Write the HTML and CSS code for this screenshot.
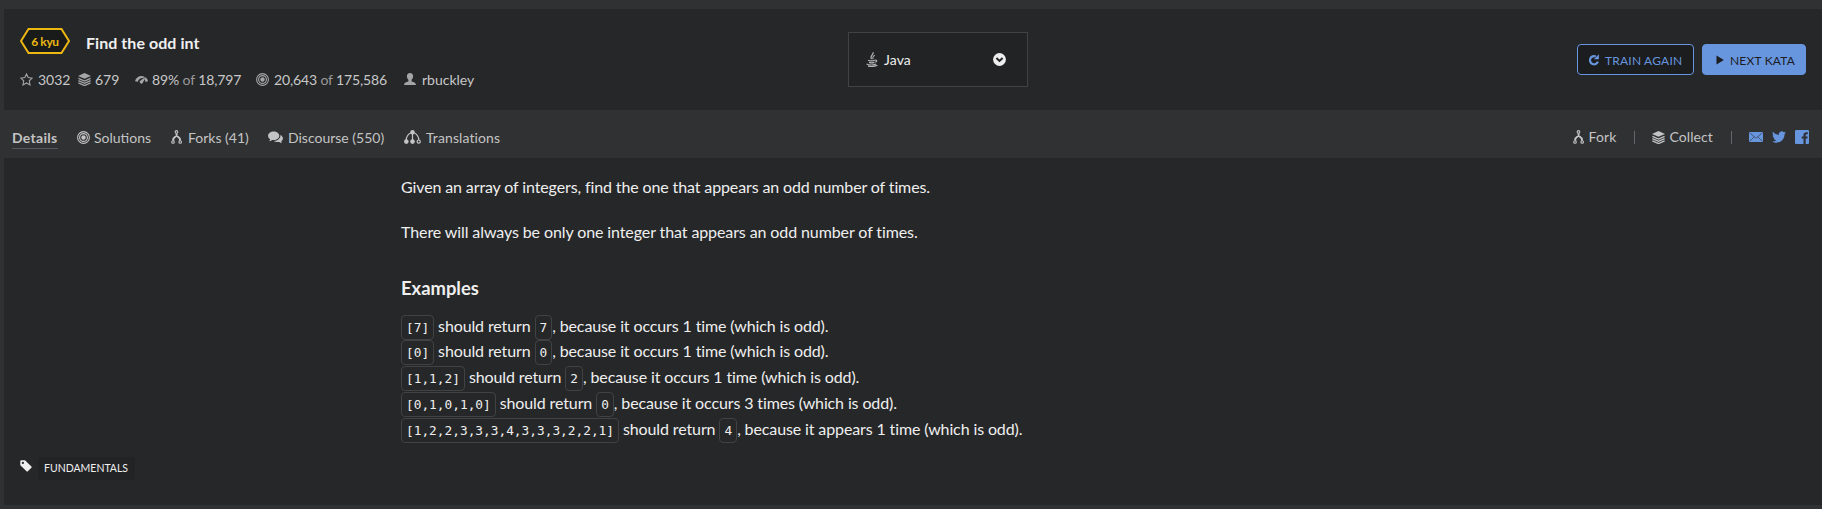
FILE: index.html
```html
<!DOCTYPE html>
<html lang="en">
<head>
<meta charset="utf-8">
<title>Find the odd int</title>
<link rel="stylesheet" href="styles.css">
</head>
<body>
<svg class="defs" width="0" height="0">
  <symbol id="layers" viewBox="0 0 13 13"><path d="M6.500 0 13 2.900 6.500 5.800 0 2.900z"/><path fill="none" stroke="currentColor" stroke-width="1.300" d="M.4 5.400 6.500 8.100l6.100-2.700M.4 7.700l6.100 2.700 6.100-2.700M.4 9.900l6.100 2.700 6.100-2.700"/></symbol>
  <symbol id="target" viewBox="0 0 13 13"><g fill="none" stroke="currentColor"><circle cx="6.500" cy="6.500" r="5.900" stroke-width="1.100"/><circle cx="6.500" cy="6.500" r="3.900" stroke-width="1.100"/></g><circle cx="6.500" cy="6.500" r="2.200"/></symbol>
  <symbol id="fork" viewBox="0 0 12 14"><g fill="none" stroke="currentColor"><circle cx="5.500" cy="1.900" r="1.300" stroke-width="1.100"/><circle cx="2" cy="12" r="1.300" stroke-width="1.100"/><circle cx="9.200" cy="12" r="1.300" stroke-width="1.100"/><path stroke-width="1.900" d="M5.600 3.400v2.500M5.600 5.400 2.300 8.600v2.100M5.600 5.400 8.900 8.600v2.100"/></g></symbol>
</svg>
<div class="page">
  <header class="head">
    <div class="info">
      <div class="title-row">
        <div class="rank"><svg class="hex" width="50" height="26" viewBox="0 0 50 26"><path d="M8.500 1h33L49 13l-7.500 12h-33L1 13z" fill="#191b1b" stroke="#ecb613" stroke-width="2"/></svg><span class="rank-text">6 kyu</span></div>
        <h1 class="title">Find the odd int</h1>
      </div>
      <div class="stats">
        <div class="stat"><svg width="13" height="13" viewBox="0 0 13 13"><path fill="none" stroke="currentColor" stroke-width="1.100" d="M6.500 1 8.200 4.600 12.200 5.100 9.300 7.800 10 11.900 6.500 9.900 3 11.900 3.700 7.800.8 5.100 4.800 4.600z"/></svg><span class="val">3032</span></div>
        <div class="stat"><svg width="13" height="13"><use href="#layers"/></svg><span class="val near">679</span></div>
        <div class="stat"><svg width="13" height="13" viewBox="0 0 13 13"><path d="M0 8.200C.8 5 3.400 3 6.500 3c1.200 0 2.100.2 3 .7L8.200 5C6 4.700 3.700 5.800 2.800 8.700zM10.900 4.500c1.100.9 1.800 2.100 2.100 3.700l-2.600.7c-.1-1-.4-1.700-.9-2.300z"/><path d="M11 3.600 7.700 10a1.700 1.700 0 0 1-2.800-1.900z"/></svg><span class="val near tight">89% <i>of</i> 18,797</span></div>
        <div class="stat"><svg width="13" height="13"><use href="#target"/></svg><span class="val tight">20,643 <i>of</i> 175,586</span></div>
        <div class="stat"><svg width="12" height="13" viewBox="0 0 12 13"><path d="M6 0c2 0 3.100 1.400 3.100 3.300 0 1.500-.6 2.700-1.500 3.500v1.600c2.700.6 4.400 1.600 4.400 3.600H0c0-2 1.700-3 4.400-3.600V6.800C3.500 6 2.900 4.800 2.900 3.300 2.900 1.400 4 0 6 0z"/></svg><span class="val last">rbuckley</span></div>
      </div>
    </div>
    <div class="select"><svg class="java" width="12" height="15" viewBox="0 0 12 15"><g fill="none" stroke="currentColor" stroke-width="1.200"><path d="M7 .2C8.200 2.600 3.200 3.600 5.600 7.200M8.800 3.200C6.800 4.400 6.200 5 7.200 7.200M2 8.300c2 .8 5 .7 7 0M9.200 8.300c2-.6 2 1.400 0 2M3 10.400c1.600.6 3.800.6 5.400 0M.6 12c2 1.400 8.500 1.300 9.400-.1M2 14.200c3 .5 7 .3 9.400-.9"/></g></svg><span class="lang">Java</span><svg class="caret" width="13" height="13" viewBox="0 0 13 13"><circle cx="6.500" cy="6.500" r="6.400" fill="#eee"/><path d="M3.400 5.100 6.500 8l3.100-2.900" fill="none" stroke="#222325" stroke-width="2"/></svg></div>
    <div class="actions">
      <a class="btn"><svg width="12" height="12" viewBox="0 0 12 12"><path fill="none" stroke="currentColor" stroke-width="2.200" d="M7.800 2.500A4.100 4.100 0 1 0 9.900 7.600"/><path d="M10.900.2v5H5.900z"/></svg><span>TRAIN AGAIN</span></a>
      <a class="btn solid"><svg width="12" height="12" viewBox="0 0 12 12"><path d="M2.500 1.500 9.800 6 2.500 10.500z"/></svg><span>NEXT KATA</span></a>
    </div>
  </header>
  <nav class="nav">
    <div class="tabs">
      <a class="tab active">Details</a>
      <a class="tab"><svg width="13" height="13"><use href="#target"/></svg><span class="label">Solutions</span></a>
      <a class="tab"><svg width="12" height="14"><use href="#fork"/></svg><span class="label wide">Forks (41)</span></a>
      <a class="tab"><svg width="15" height="13" viewBox="0 0 15 13"><path d="M5.700.5c3.200 0 5.600 1.900 5.600 4.300S8.900 9.100 5.700 9.100c-.6 0-1.100 0-1.600-.1-.9.800-1.900 1.200-3 1.200.7-.6 1-1.200 1-2C.8 7.400.1 6.200.1 4.800.1 2.400 2.500.5 5.700.5z"/><path d="M12.400 4.100c1.500.7 2.500 1.900 2.500 3.300 0 1.200-.7 2.200-1.700 2.900.1.800.4 1.300.9 1.800-1.200 0-2.100-.4-2.900-1.100-2 .3-4.200-.2-5.300-1.100 3.800 0 6.800-2.300 6.500-5.800z"/></svg><span class="label wide">Discourse (550)</span></a>
      <a class="tab"><svg width="17" height="14" viewBox="0 0 17 14"><circle cx="8.500" cy="2.300" r="2.300"/><g fill="none" stroke="currentColor" stroke-width="1.200"><path d="M8.500 3v8M6.600 3C3.500 4.500 2.500 6 2.200 10M10.400 3c3.100 1.500 4.100 3 4.400 7"/><circle cx="14.700" cy="11.600" r="1.600"/></g><circle cx="2.300" cy="11.600" r="2.300"/><circle cx="8.500" cy="11.600" r="2.300"/></svg><span class="label wide spaced">Translations</span></a>
    </div>
    <div class="tools">
      <a class="tool"><svg width="12" height="14"><use href="#fork"/></svg><span class="label">Fork</span></a>
      <span class="sep"></span>
      <a class="tool"><svg width="13" height="13"><use href="#layers"/></svg><span class="label">Collect</span></a>
      <span class="sep"></span>
      <div class="social">
        <svg width="14" height="14" viewBox="0 0 14 14"><path d="M0 2h14v10H0z"/><path d="M.3 2.500 7 8.200l6.700-5.700M.3 11.600l4.900-4.800M13.700 11.600 8.800 6.800" fill="none" stroke="#303133" stroke-width=".6"/></svg>
        <svg width="14" height="14" viewBox="0 0 24 24"><path d="M24 4.600c-.9.400-1.800.7-2.800.8 1-.6 1.800-1.600 2.200-2.700-1 .6-2 1-3.100 1.200A4.900 4.900 0 0 0 11.900 8.400C7.700 8.200 4.100 6.200 1.700 3.200c-1.300 2.200-.7 5.100 1.500 6.600-.8 0-1.600-.2-2.200-.6 0 2.300 1.600 4.400 3.900 4.900-.7.200-1.500.2-2.200.1.600 2 2.400 3.400 4.600 3.400A9.900 9.900 0 0 1 0 19.500a13.900 13.900 0 0 0 7.500 2.200c9.100 0 14.300-7.700 14-14.600.9-.7 1.800-1.600 2.500-2.500z"/></svg>
        <svg width="14" height="14" viewBox="0 0 14 14"><path fill-rule="evenodd" d="M1 0h12a1 1 0 0 1 1 1v12a1 1 0 0 1-1 1h-2.300V8.600h1.700l.3-2.100h-2V5.200c0-.6.3-1 1.100-1h1V2.300c-2.800-.4-4.300.4-4.300 2.600v1.600H6.700v2.100h1.800V14H1a1 1 0 0 1-1-1V1a1 1 0 0 1 1-1z"/></svg>
      </div>
    </div>
  </nav>
  <main class="body">
    <article class="desc">
      <p class="lead">Given an array of integers, find the one that appears an odd number of times.</p>
      <p class="second">There will always be only one integer that appears an odd number of times.</p>
      <h2>Examples</h2>
      <div class="examples">
        <div><code>[7]</code> should return <code>7</code>, because it occurs 1 time (which is odd).</div>
        <div><code>[0]</code> should return <code>0</code>, because it occurs 1 time (which is odd).</div>
        <div><code>[1,1,2]</code> should return <code>2</code>, because it occurs 1 time (which is odd).</div>
        <div><code>[0,1,0,1,0]</code> should return <code>0</code>, because it occurs 3 times (which is odd).</div>
        <div><code>[1,2,2,3,3,3,4,3,3,3,2,2,1]</code> should return <code>4</code>, because it appears 1 time (which is odd).</div>
      </div>
    </article>
    <div class="tags"><svg width="12" height="12" viewBox="0 0 12 12"><path fill-rule="evenodd" d="M.3 1.300a1 1 0 0 1 1-1H5l6.400 6.100a.9.900 0 0 1 0 1.300L7.800 11.300a.9.900 0 0 1-1.300 0L.3 5.200zM2.900 1.800a1.100 1.100 0 1 0 0 2.200 1.100 1.100 0 0 0 0-2.200z"/></svg><span class="tag">FUNDAMENTALS</span></div>
  </main>
</div>
</body>
</html>
```
FILE: styles.css
```css
* { box-sizing: border-box; }
body { margin: 0; background: #303133; font-family: Lato, sans-serif; color: #efefef; overflow: hidden; }
svg { fill: currentColor; flex: none; display: block; }
.defs { position: absolute; }
.page { height: 509px; padding: 9px 0 4px 4px; display: flex; flex-direction: column; white-space: nowrap; }
.head { height: 101px; background: #262729; display: grid; grid-template-columns: 844px 180px 1fr; align-items: start; }
.info { padding: 19px 0 0 16px; }
.title-row { display: flex; height: 26px; }
.rank { display: grid; width: 50px; height: 26px; grid-template-rows: 26px; justify-items: center; }
.hex, .rank-text { grid-area: 1 / 1; }
.rank-text { color: #ecb613; font-size: 12px; font-weight: 700; line-height: 27px; letter-spacing: -.4px; }
.title { margin: 3px 0 0 16px; font-size: 16px; line-height: 24px; font-weight: 700; letter-spacing: .05px; }
.stats { margin-top: 16px; display: grid; grid-template-columns: 58px 57px 121px 148px auto; height: 20px; }
.stat { display: flex; align-items: center; color: #a5a5a5; font-size: 14px; line-height: 20px; }
.stat svg { margin-top: -2px; }
.val { margin-left: 5px; color: #c8c8c8; }
.val.near { margin-left: 4px; }
.val.last { margin-left: 6px; }
.val.tight { letter-spacing: -.13px; }
.val i { font-style: normal; color: #999; }
.select { margin-top: 23px; height: 55px; border: 1px solid #414244; background: #222325; display: flex; align-items: center; padding: 0 21px 0 17px; }
.java { color: #b5b5b5; }
.lang { margin-left: 6px; font-size: 14px; letter-spacing: .1px; }
.caret { margin: -1px 0 0 auto; }
.actions { margin-top: 35px; padding-right: 16px; display: flex; justify-content: flex-end; gap: 8px; }
.btn { width: 117px; height: 31px; border: 1px solid #6795de; border-radius: 4px; background: #1c1d1f; color: #6795de; display: flex; align-items: center; padding-left: 10px; font-size: 12px; letter-spacing: .2px; }
.btn span { margin: 2px 0 0 5px; }
.btn.solid { width: 104px; background: #6795de; color: #1c1d1f; padding-left: 11px; }
.btn.solid span { margin-left: 4px; }
.nav { height: 48px; display: flex; justify-content: space-between; color: #c4c4c4; font-size: 14px; line-height: 20px; }
.tabs { display: grid; grid-template-columns: 65px 94px 97px 136px auto; padding: 18px 0 0 8px; align-items: start; }
.tab { display: flex; align-items: center; height: 20px; }
.tab svg { margin-top: -2px; }
.tab.active { font-weight: 700; justify-self: start; border-bottom: 1px solid #56575a; letter-spacing: .3px; height: 21px; }
.label { margin-left: 4px; }
.label.wide { margin-left: 5px; }
.label.spaced { letter-spacing: .1px; }
.tools { display: flex; align-items: center; height: 20px; margin-top: 17px; padding-right: 13px; }
.tool { display: flex; align-items: center; letter-spacing: .1px; }
.sep { width: 1px; height: 13px; background: #65666a; margin: 0 17px 0 18px; }
.social { display: flex; gap: 9px; color: #6795de; }
.body { height: 347px; background: #262729; padding-top: 16px; display: flex; flex-direction: column; }
.desc { height: 283px; margin-left: 397px; font-size: 16px; line-height: 25.6px; letter-spacing: -.12px; }
.desc p { margin: 0; }
.desc .lead { margin-bottom: 19.4px; }
.desc .second { letter-spacing: -.1px; }
.desc h2 { margin: 30px 0 12px; font-size: 18.4px; line-height: 26px; font-weight: 700; letter-spacing: 0; }
.examples > div { height: 25.75px; }
code { font-family: "DejaVu Sans Mono", monospace; font-size: 12.8px; line-height: 1; letter-spacing: 0; border: 1px solid #414244; border-radius: 4px; padding: 4px; }
.tags { display: flex; padding-left: 16px; }
.tags svg { margin-top: 3px; }
.tag { margin-left: 6px; padding: 0 6px; width: 97px; height: 23px; border-radius: 4px; background: #222325; font-size: 10.5px; line-height: 23px; }
```
